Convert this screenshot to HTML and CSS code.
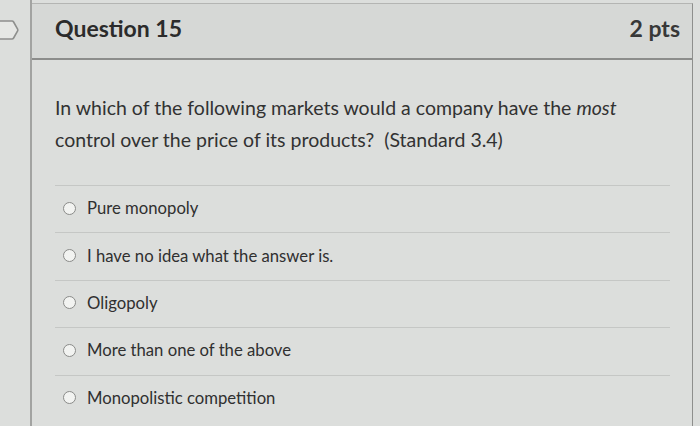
FILE: index.html
```html
<!DOCTYPE html>
<html lang="en">
<head>
  <meta charset="UTF-8" />
  <meta name="viewport" content="width=device-width, initial-scale=1.0" />
  <title>Question 15</title>
  <link rel="stylesheet" href="styles.css">
</head>
<body>
  <div class="page">
    <!-- flag rail -->
    <div class="rail">
      <svg class="flag" width="20" height="22" viewBox="0 0 20 22">
        <path d="M-4 2 H12 Q13 2 13.6 3 L17.6 10 Q18 11 17.6 12 L13.6 19 Q13 20 12 20 H-4" fill="#e6e7e5" stroke="#8e8f8d" stroke-width="1.6" />
      </svg>
    </div>

    <div class="question">
      <div class="question-header">
        <span class="question-title">Question 15</span>
        <span class="question-points">2 pts</span>
      </div>

      <div class="question-body">
        <p class="question-text">
          In which of the following markets would a company have the <em>most</em>
          control over the price of its products?&nbsp; (Standard 3.4)
        </p>

        <div class="answers">
          <label class="answer"><span class="radio"></span>Pure monopoly</label>
          <label class="answer"><span class="radio"></span>I have no idea what the answer is.</label>
          <label class="answer"><span class="radio"></span>Oligopoly</label>
          <label class="answer"><span class="radio"></span>More than one of the above</label>
          <label class="answer"><span class="radio"></span>Monopolistic competition</label>
        </div>
      </div>
    </div>
  </div>
</body>
</html>
```

FILE: styles.css
```css
* {
  box-sizing: border-box;
  margin: 0;
  padding: 0;
}

body {
  background: #dcdedc;
  font-family: 'Lato', 'Open Sans', sans-serif;
  color: #333;
  height: 100vh;
  overflow: hidden;
}

.page {
  display: flex;
  height: 100%;
}

.rail {
  width: 32px;
  flex-shrink: 0;
  border-right: 2px solid #a2a3a1;
  padding-top: 19px;
}

.flag {
  display: block;
}

.question {
  flex: 1;
  margin-top: 3px;
  margin-right: 7px;
  border-top: 1px solid #b4b5b3;
  border-right: 1px solid #8e8f8d;
}

.question-header {
  height: 56px;
  display: flex;
  align-items: center;
  justify-content: space-between;
  padding: 0 12px 6px 23px;
  background: #d6d8d6;
  border-bottom: 2px solid #8c8d8b;
}

.question-title,
.question-points {
  font-size: 23px;
  font-weight: 700;
  color: #2b2b2b;
}

.question-points {
  color: #383838;
}

.question-body {
  padding: 32px 22px 0 23px;
}

.question-text {
  font-size: 19.5px;
  line-height: 32px;
  color: #323232;
  margin-bottom: 29px;
}

.question-text em {
  font-style: italic;
}

.answer {
  display: flex;
  align-items: center;
  height: 47.4px;
  padding-left: 8px;
  padding-bottom: 2px;
  border-top: 1px solid #c5c7c5;
  font-size: 16.7px;
  color: #303030;
}

.radio {
  width: 13px;
  height: 13px;
  border: 1.5px solid #8a8b89;
  border-radius: 50%;
  background: #f2f3f1;
  margin-right: 11px;
}
```
